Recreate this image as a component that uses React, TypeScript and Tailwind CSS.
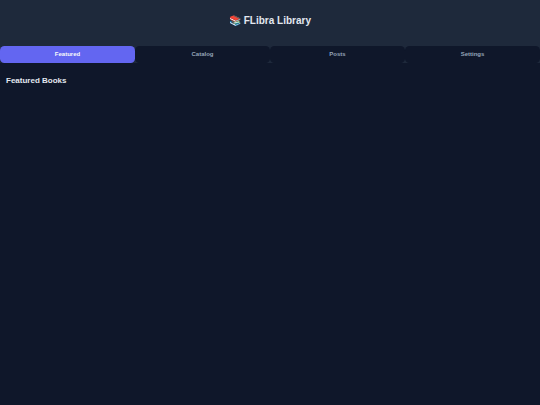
export default function App() {
  const tabs = ["Featured", "Catalog", "Posts", "Settings"];
  return (
    <div className="min-h-[405px] bg-[#0f172a] font-['Liberation_Sans',Arial,sans-serif]">
      <header className="h-[45.5px] flex items-center justify-center bg-[#1e293b] pb-[4px]">
        <h1 className="text-[10px] font-semibold text-[#e2e8f0] text-center leading-none">📚 FLibra Library</h1>
      </header>
      <nav className="flex bg-[#1e293b]">
        {tabs.map((t, i) => (
          <button key={t} className={"flex-1 h-[17px] rounded-[4.5px] text-[6px] font-semibold flex items-center justify-center " + (i === 0 ? "bg-[#6366f1] text-[#f8fafc]" : "bg-[#0f172a] text-[#94a3b8]")}>
            {t}
          </button>
        ))}
      </nav>
      <main className="px-[6px] pt-[12.5px]">
        <h2 className="text-[8px] font-semibold text-[#e2e8f0] leading-3">Featured Books</h2>
      </main>
    </div>
  );
}
